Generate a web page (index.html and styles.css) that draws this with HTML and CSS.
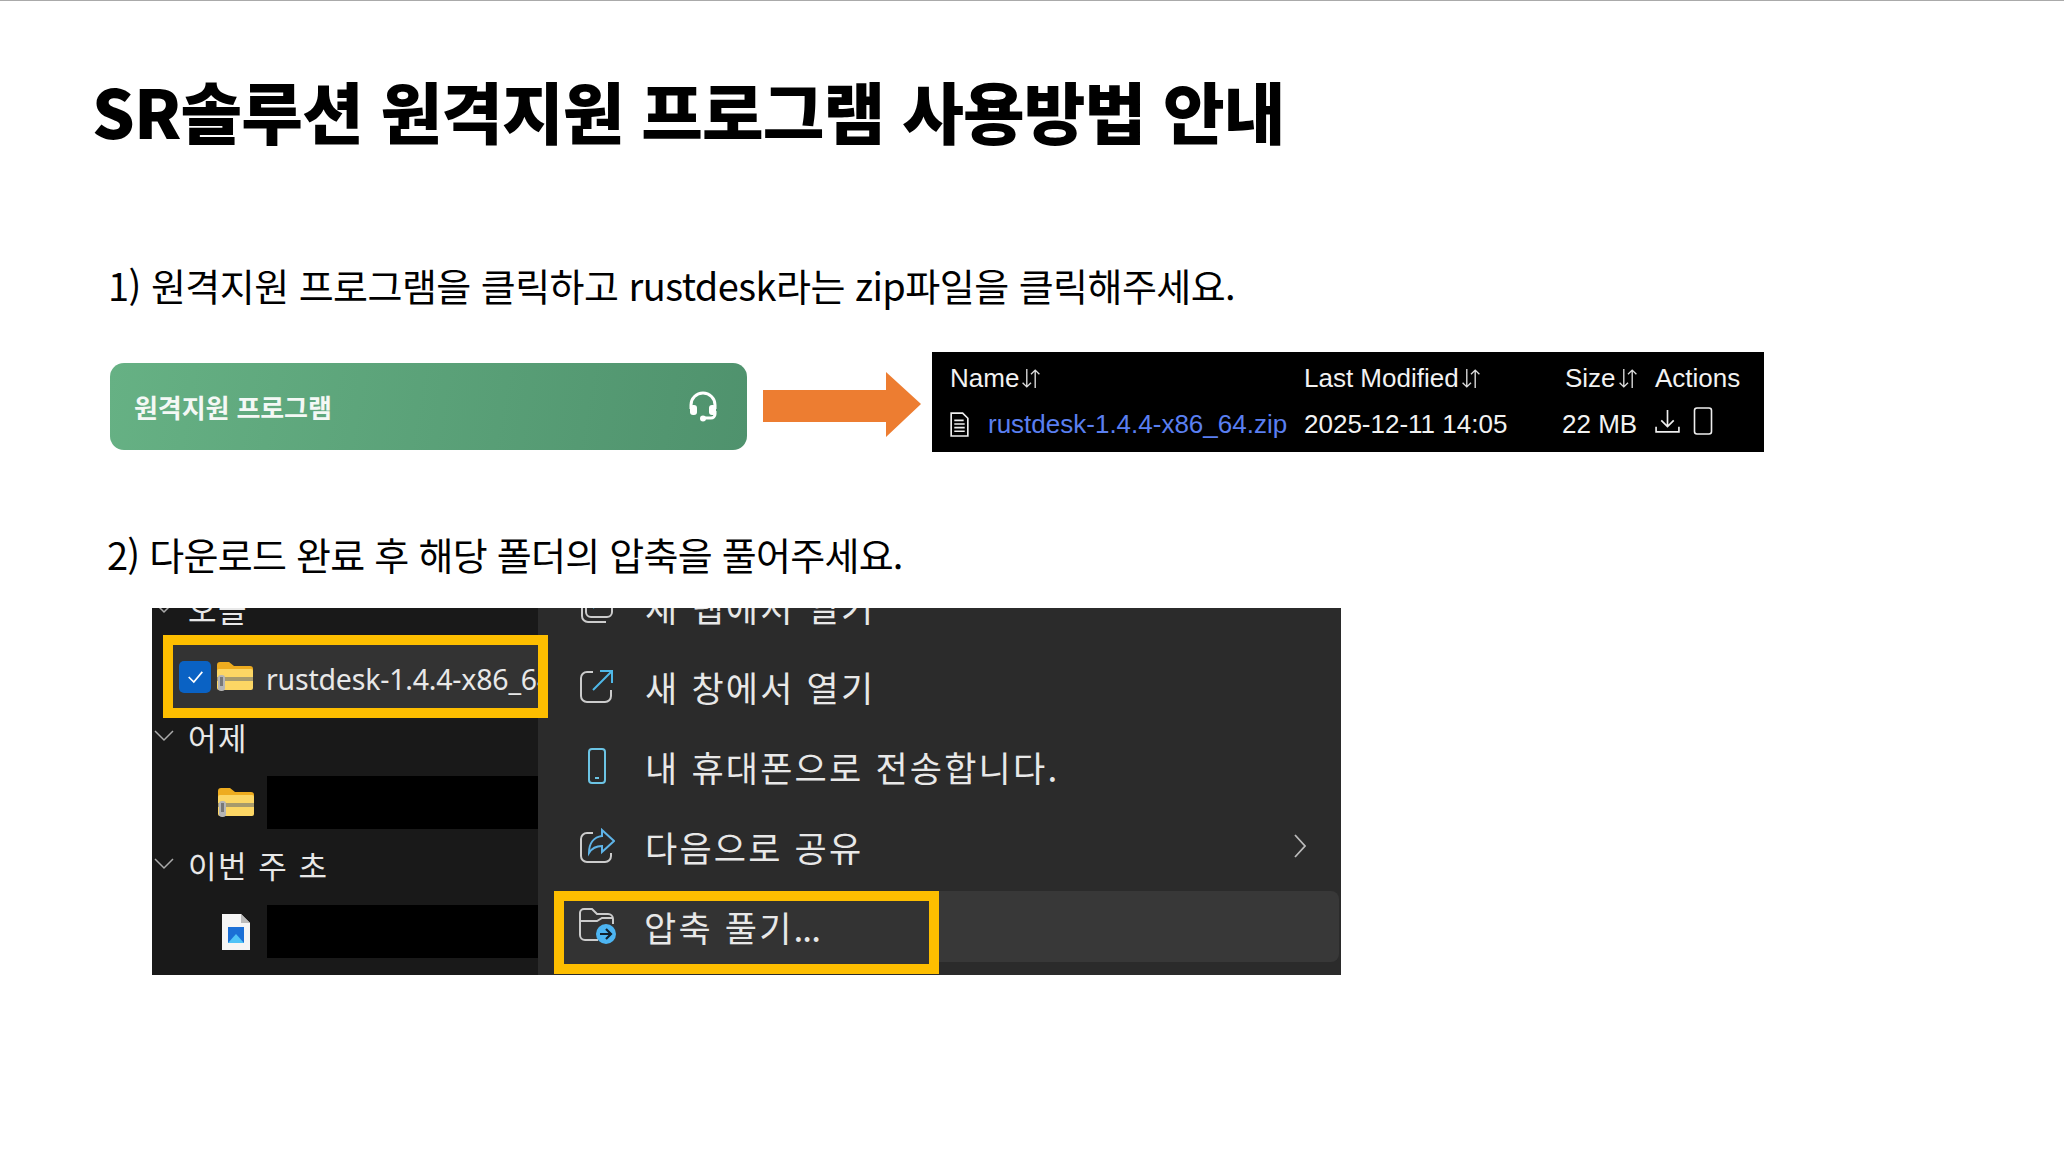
FILE: index.html
```html
<!DOCTYPE html>
<html lang="ko">
<head>
<meta charset="utf-8">
<title>SR솔루션 원격지원 프로그램 사용방법 안내</title>
<link rel="stylesheet" href="styles.css">
</head>
<body>
<main class="slide">
  <h1 class="title">SR솔루션 원격지원 프로그램 사용방법 안내</h1>

  <p class="step step-one">1) 원격지원 프로그램을 클릭하고 rustdesk라는 zip파일을 클릭해주세요.</p>

  <div class="flow">
    <div class="support">
      <span class="support-label">원격지원 프로그램</span>
      <svg class="support-icon" viewBox="0 0 32 32" fill="none" stroke="#fff" stroke-width="3">
        <path d="M4 18v-4a12 12 0 0 1 24 0v4"/>
        <path d="M28 20v3a4 4 0 0 1-4 4h-6"/>
        <rect x="3" y="14" width="7" height="10" rx="3" fill="#fff" stroke="none"/>
        <rect x="22" y="14" width="7" height="10" rx="3" fill="#fff" stroke="none"/>
        <circle cx="16" cy="27.5" r="3" fill="#fff" stroke="none"/>
      </svg>
    </div>

    <svg class="arrow" viewBox="0 0 158 65"><polygon points="0,18 123,18 123,0 158,32 123,65 123,50 0,50" fill="#ed7d31"/></svg>

    <div class="files">
      <div class="files-head">
        <span>Name<svg class="sort" viewBox="0 0 18 20"><path d="M5 1v17M1 14l4 4 4-4M13 19V2M9 6l4-4 4 4" fill="none" stroke="#ddd" stroke-width="1.3"/></svg></span>
        <span>Last Modified<svg class="sort" viewBox="0 0 18 20"><path d="M5 1v17M1 14l4 4 4-4M13 19V2M9 6l4-4 4 4" fill="none" stroke="#ddd" stroke-width="1.3"/></svg></span>
        <span class="size-head">Size<svg class="sort" viewBox="0 0 18 20"><path d="M5 1v17M1 14l4 4 4-4M13 19V2M9 6l4-4 4 4" fill="none" stroke="#ddd" stroke-width="1.3"/></svg></span>
        <span class="actions-head">Actions</span>
      </div>
      <div class="files-row">
        <span class="file-name">
          <svg class="doc" viewBox="0 0 20 24" fill="none" stroke="#eee" stroke-width="1.6"><path d="M2 1h11l5 5v17H2z"/><path d="M5 8h9M5 11.5h10M5 15h10M5 18.500h10"/></svg>
          <span class="file-link">rustdesk-1.4.4-x86_64.zip</span>
        </span>
        <span>2025-12-11 14:05</span>
        <span class="size-cell">22 MB</span>
        <span class="actions">
          <svg class="download" viewBox="0 0 26 26" fill="none" stroke="#eee" stroke-width="1.6"><path d="M13 2v16M7 12l6 6 6-6M2 18v5h22v-5"/></svg>
          <svg class="device" viewBox="0 0 20 28" fill="none" stroke="#eee" stroke-width="1.6"><rect x="1.500" y="1" width="17" height="26" rx="2.500"/></svg>
        </span>
      </div>
    </div>
  </div>

  <p class="step step-two">2) 다운로드 완료 후 해당 폴더의 압축을 풀어주세요.</p>

  <div class="explorer">
    <div class="side">
      <div class="group group-today">
        <svg class="chev" viewBox="0 0 20 12"><path d="M1 1l9 9 9-9" fill="none" stroke="#aaa" stroke-width="1.500"/></svg>
        <span>오늘</span>
      </div>
      <div class="selected">
        <span class="check"><svg viewBox="0 0 20 16"><path d="M2 8l6 6L18 2" fill="none" stroke="#fff" stroke-width="2"/></svg></span>
        <svg class="zip" viewBox="0 0 36 30"><path d="M0 3a3 3 0 0 1 3-3h9l5 4h16a3 3 0 0 1 3 3v4H0z" fill="#eeac1f"/><rect y="7" width="36" height="21" rx="2" fill="#fcd664"/><rect y="15" width="36" height="4" fill="#a79a6c"/><rect x="1" y="13" width="7" height="16" rx="3" fill="#b5b5b5"/><rect x="3" y="15" width="3" height="9" fill="#777"/></svg>
        <span class="sel-name">rustdesk-1.4.4-x86_64.zip</span>
      </div>
      <div class="group group-yesterday">
        <svg class="chev" viewBox="0 0 20 12"><path d="M1 1l9 9 9-9" fill="none" stroke="#aaa" stroke-width="1.500"/></svg>
        <span>어제</span>
      </div>
      <div class="item item-zip">
        <svg class="zip" viewBox="0 0 36 30"><path d="M0 3a3 3 0 0 1 3-3h9l5 4h16a3 3 0 0 1 3 3v4H0z" fill="#eeac1f"/><rect y="7" width="36" height="21" rx="2" fill="#fcd664"/><rect y="15" width="36" height="4" fill="#a79a6c"/><rect x="1" y="13" width="7" height="16" rx="3" fill="#b5b5b5"/><rect x="3" y="15" width="3" height="9" fill="#777"/></svg>
        <span class="redact"></span>
      </div>
      <div class="group group-week">
        <svg class="chev" viewBox="0 0 20 12"><path d="M1 1l9 9 9-9" fill="none" stroke="#aaa" stroke-width="1.500"/></svg>
        <span>이번 주 초</span>
      </div>
      <div class="item item-image">
        <svg class="pic" viewBox="0 0 28 36"><path d="M0 0h19l9 9v27H0z" fill="#f5f5f5"/><path d="M19 0l9 9h-9z" fill="#bbb"/><rect x="6" y="13" width="16" height="16" fill="#1b6fd6"/><path d="M6 29l8-9 8 9z" fill="#4fc3f7"/></svg>
        <span class="redact"></span>
      </div>
    </div>

    <div class="menu">
      <div class="menu-item menu-clipped">
        <svg class="mi" viewBox="0 0 36 36" fill="none" stroke="#ccc" stroke-width="2"><rect x="7" y="3" width="26" height="26" rx="5"/><path d="M3 10v18a6 6 0 0 0 6 6h18"/><path d="M14 20l11-11M17 9h8v8" stroke="#4fb8e8"/></svg>
        <span>새 탭에서 열기</span>
      </div>
      <div class="menu-item">
        <svg class="mi" viewBox="0 0 36 36" fill="none" stroke="#ccc" stroke-width="2"><path d="M14 4H8a6 6 0 0 0-6 6v18a6 6 0 0 0 6 6h18a6 6 0 0 0 6-6v-6"/><path d="M14 22L33 3M21 3h12v12" stroke="#4fb8e8"/></svg>
        <span>새 창에서 열기</span>
      </div>
      <div class="menu-item">
        <svg class="mi" viewBox="0 0 36 36" fill="none" stroke="#6cc4e4" stroke-width="2"><rect x="10" y="1" width="16" height="34" rx="3"/><path d="M16 30h4"/></svg>
        <span>내 휴대폰으로 전송합니다.</span>
      </div>
      <div class="menu-item">
        <svg class="mi" viewBox="0 0 36 36" fill="none" stroke="#ccc" stroke-width="2"><path d="M14 5H8a6 6 0 0 0-6 6v17a6 6 0 0 0 6 6h18a6 6 0 0 0 6-6v-3"/><path d="M23 2l12 11-12 11v-6c-6 0-10 2-13 7 0-10 5-16 13-17z" stroke="#5fb4e8"/></svg>
        <span>다음으로 공유</span>
        <svg class="more" viewBox="0 0 12 24"><path d="M1 1l10 11L1 23" fill="none" stroke="#bbb" stroke-width="1.800"/></svg>
      </div>
      <div class="hover-row">
        <div class="menu-item extract">
          <svg class="mi" viewBox="0 0 38 38" fill="none" stroke="#ccc" stroke-width="2"><path d="M20 33H7a5 5 0 0 1-5-5V6a4 4 0 0 1 4-4h8l5 5h11a5 5 0 0 1 5 5v5"/><path d="M2 14h17l5-3h10"/><circle cx="28" cy="27" r="10" fill="#4db5f2" stroke="none"/><path d="M22 27h11M28 22l5 5-5 5" stroke="#12202c" stroke-width="2.200"/></svg>
          <span>압축 풀기<span class="dots">...</span></span>
        </div>
      </div>
    </div>
  </div>
</main>
</body>
</html>
```

FILE: styles.css
```css
* { box-sizing: border-box; }

html, body {
  margin: 0;
  padding: 0;
  background: #fff;
}

.slide {
  width: 2064px;
  height: 1160px;
  overflow: hidden;
  border-top: 1px solid #aaa;
  font-family: "Noto Sans CJK KR", "Noto Sans", sans-serif;
  color: #000;
}

.title {
  margin: 60px 0 0 92px;
  font-size: 67px;
  line-height: 98px;
  font-weight: 900;
  letter-spacing: -0.900px;
  white-space: nowrap;
}

.step {
  margin: 0;
  font-size: 38px;
  line-height: 56px;
  white-space: nowrap;
}

.step-one { margin: 98px 0 0 108px; letter-spacing: -0.550px; }
.step-two { margin: 74px 0 0 107px; letter-spacing: -0.750px; }

.flow {
  display: flex;
  align-items: flex-start;
  margin: 39px 0 0 110px;
}

.support {
  width: 637px;
  height: 87px;
  margin-top: 11px;
  padding: 0 28px 0 24px;
  border-radius: 14px;
  background: linear-gradient(100deg, #66b184, #4f926d);
  display: flex;
  align-items: center;
  justify-content: space-between;
  color: #f4f8f5;
}

.support-label {
  font-size: 26px;
  font-weight: 700;
  letter-spacing: -0.100px;
}

.support-icon { width: 32px; height: 32px; }

.arrow {
  width: 158px;
  height: 65px;
  margin: 20px 11px 0 16px;
  flex: none;
}

.files {
  width: 832px;
  height: 100px;
  padding: 11px 0 0 0;
  background: #000;
  color: #f2f2f2;
  font-family: "Liberation Sans", Arial, sans-serif;
  font-size: 26px;
  line-height: 30px;
  white-space: nowrap;
}

.files-head, .files-row {
  display: grid;
  grid-template-columns: 372px 258px 91px 111px;
  align-items: center;
}

.files-head { padding-bottom: 16px; }
.files-head > span { display: flex; align-items: center; }
.files-head > span:first-child { padding-left: 18px; }

.size-head { padding-left: 3px; }
.size-cell { padding-left: 0; }
.actions-head { padding-left: 2px; }

.sort { width: 20px; height: 21px; margin-left: 2px; }

.file-name { display: flex; align-items: center; padding-left: 17px; }
.doc { width: 21px; height: 25px; margin-right: 18px; }
.file-link { color: #5a7ff0; }

.actions { display: flex; align-items: center; gap: 12px; margin-top: -6px; padding-left: 1px; }
.download { width: 27px; height: 27px; }
.device { width: 20px; height: 28px; }

.explorer {
  display: grid;
  grid-template-columns: 386px 1fr;
  width: 1189px;
  height: 367px;
  margin: 26px 0 0 152px;
  overflow: hidden;
  background: #2b2b2b;
  color: #e8e8e8;
}

.side {
  position: relative;
  background: #191919;
  height: 367px;
}

.group {
  display: flex;
  align-items: center;
  height: 40px;
  padding-left: 2px;
  font-size: 31px;
  letter-spacing: 1.500px;
  white-space: nowrap;
}

.chev { width: 20px; height: 12px; margin-right: 14px; }

.group-today { margin-top: -20px; margin-bottom: 7px; }
.group-yesterday { margin-top: -2px; }
.group-week { margin-top: 15px; }

.selected {
  position: relative;
  z-index: 2;
  display: flex;
  align-items: center;
  width: 385px;
  height: 83px;
  margin-left: 11px;
  border: 10px solid #fdbe00;
  background: #333;
  padding-left: 6px;
  overflow: hidden;
}

.check {
  flex: none;
  width: 32px;
  height: 32px;
  border-radius: 5px;
  background: #0a62c4;
  display: flex;
  align-items: center;
  justify-content: center;
  margin-right: 6px;
}

.check svg { width: 17px; height: 14px; }

.zip { flex: none; width: 36px; height: 30px; }

.sel-name {
  margin-left: 13px;
  padding-top: 4px;
  font-family: "Noto Sans", sans-serif;
  font-size: 28.500px;
  letter-spacing: -0.200px;
  white-space: nowrap;
}

.item {
  display: flex;
  align-items: center;
  height: 53px;
}

.item-zip { margin-top: 20px; padding-left: 66px; }
.item-image { margin-top: 21px; padding-left: 70px; }

.redact {
  flex: 1;
  height: 53px;
  background: #000;
}

.item-zip .redact { margin-left: 13px; }
.item-image .redact { margin-left: 17px; }

.pic { flex: none; width: 28px; height: 36px; }

.menu {
  position: relative;
  background: #2b2b2b;
}

.menu-item {
  display: flex;
  align-items: center;
  height: 80px;
  padding-left: 41px;
  font-size: 35px;
  letter-spacing: 2.200px;
  white-space: nowrap;
}

.menu-clipped { margin-top: -42px; }

.mi { flex: none; width: 36px; height: 36px; margin-right: 30px; }

.more { width: 12px; height: 24px; margin-left: auto; margin-right: 35px; }

.hover-row {
  height: 71px;
  margin: 5px 2px 0 17px;
  border-radius: 8px;
  background: #383838;
}

.extract {
  width: 385px;
  height: 83px;
  padding: 0 0 13px 14px;
  border: 10px solid #fdbe00;
  background: #333;
  margin: 0 0 0 -1px;
}

.extract .mi { width: 38px; height: 38px; margin-right: 28px; }
.dots { letter-spacing: -1px; }
```
